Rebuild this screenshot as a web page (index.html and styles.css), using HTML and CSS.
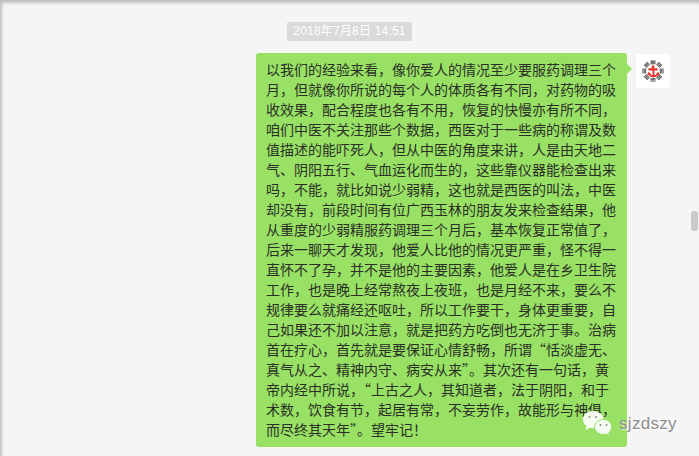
FILE: index.html
```html
<!DOCTYPE html>
<html lang="zh-CN">
<head>
    <meta charset="UTF-8">
    <meta name="viewport" content="width=device-width, initial-scale=1.0">
    <title>聊天记录</title>
    <link rel="stylesheet" href="styles.css">
</head>
<body>
    <div class="chat">
        <div class="time-row">
            <span class="time">2018年7月8日 14:51</span>
        </div>
        <div class="message">
            <div class="bubble">
                <p>以我们的经验来看，像你爱人的情况至少要服药调理三个<br>
                月，但就像你所说的每个人的体质各有不同，对药物的吸<br>
                收效果，配合程度也各有不用，恢复的快慢亦有所不同，<br>
                咱们中医不关注那些个数据，西医对于一些病的称谓及数<br>
                值描述的能吓死人，但从中医的角度来讲，人是由天地二<br>
                气、阴阳五行、气血运化而生的，这些靠仪器能检查出来<br>
                吗，不能，就比如说少弱精，这也就是西医的叫法，中医<br>
                却没有，前段时间有位广西玉林的朋友发来检查结果，他<br>
                从重度的少弱精服药调理三个月后，基本恢复正常值了，<br>
                后来一聊天才发现，他爱人比他的情况更严重，怪不得一<br>
                直怀不了孕，并不是他的主要因素，他爱人是在乡卫生院<br>
                工作，也是晚上经常熬夜上夜班，也是月经不来，要么不<br>
                规律要么就痛经还呕吐，所以工作要干，身体更重要，自<br>
                己如果还不加以注意，就是把药方吃倒也无济于事。治病<br>
                首在疗心，首先就是要保证心情舒畅，所谓“恬淡虚无、<br>
                真气从之、精神内守、病安从来”。其次还有一句话，黄<br>
                帝内经中所说，“上古之人，其知道者，法于阴阳，和于<br>
                术数，饮食有节，起居有常，不妄劳作，故能形与神俱，<br>
                而尽终其天年”。望牢记！</p>
            </div>
            <div class="avatar">
                <svg width="22" height="22" viewBox="0 0 24 24">
                    <g fill="#4a4a4a">
                        <path id="seg" d="M9.200 0.500h5.600v1h-5.600zM9.200 2h5.600v1h-5.600zM9.200 3.500h5.600v1h-5.600z"></path>
                        <path d="M9.200 0.500h5.600v1h-5.600zM9.200 2h5.600v1h-5.600zM9.200 3.500h5.600v1h-5.600z" transform="rotate(45 12 12)"></path>
                        <path d="M9.200 0.500h5.600v1h-5.600zM9.200 2h5.600v1h-5.600zM9.200 3.500h5.600v1h-5.600z" transform="rotate(90 12 12)"></path>
                        <path d="M9.200 0.500h5.600v1h-5.600zM9.200 2h5.600v1h-5.600zM9.200 3.500h5.600v1h-5.600z" transform="rotate(135 12 12)"></path>
                        <path d="M9.200 0.500h5.600v1h-5.600zM9.200 2h5.600v1h-5.600zM9.200 3.500h5.600v1h-5.600z" transform="rotate(180 12 12)"></path>
                        <path d="M9.200 0.500h5.600v1h-5.600zM9.200 2h5.600v1h-5.600zM9.200 3.500h5.600v1h-5.600z" transform="rotate(225 12 12)"></path>
                        <path d="M9.200 0.500h5.600v1h-5.600zM9.200 2h5.600v1h-5.600zM9.200 3.500h5.600v1h-5.600z" transform="rotate(270 12 12)"></path>
                        <path d="M9.200 0.500h5.600v1h-5.600zM9.200 2h5.600v1h-5.600zM9.200 3.500h5.600v1h-5.600z" transform="rotate(315 12 12)"></path>
                    </g>
                    <path d="M10.500 6h3v3h3.500v2.500h-3.500v5c1.200-.2 2.100-.7 2.700-1.500l-1-.6 3.300-1.200.5 3.500-.9-.5c-1 1.600-2.900 2.800-5.600 2.800s-4.600-1.200-5.600-2.800l-.9.5.5-3.500 3.300 1.200-1 .6c.6.800 1.500 1.300 2.700 1.500v-5H7V9h3.500z" fill="#e5352f"></path>
                </svg>
            </div>
        </div>
    </div>

    <div class="watermark">
        <svg width="32" height="28" viewBox="0 0 32 28">
            <path d="M11 1C5 1 1 4.800 1 9.500c0 2.700 1.400 5 3.600 6.600L3.500 20l4.300-2.300c1.200.3 2.200.5 3.700.5 6 0 10-3.900 10-8.700S17 1 11 1z" fill="#fff" fill-opacity="0.92"></path>
            <path d="M21.500 9.500c-5 0-9 3.400-9 7.500s4 7.500 9 7.500c1 0 2-.2 2.900-.5l3.300 2-.9-3.300c1.800-1.400 2.900-3.500 2.900-5.700 0-4.100-3.400-7.500-8.200-7.500z" fill="#f4fbf0" stroke="#98e165" stroke-width="1"></path>
            <circle cx="7.500" cy="7" r="1" fill="#8a8a8a"></circle>
            <circle cx="14" cy="7" r="1" fill="#8a8a8a"></circle>
            <circle cx="18.500" cy="15" r="1" fill="#8a8a8a"></circle>
            <circle cx="24.500" cy="15" r="1" fill="#8a8a8a"></circle>
        </svg>
        <span>sjzdszy</span>
    </div>

    <div class="scroll-thumb"></div>
</body>
</html>
```

FILE: styles.css
```css
html, body {
    height: 100%;
}
body {
    margin: 0;
    background-color: #f5f5f5;
    font-family: "Noto Sans CJK SC", "Liberation Sans", sans-serif;
    overflow: hidden;
    box-shadow: inset 2px 3px 3px rgba(0, 0, 0, 0.22);
}
.chat {
    display: flex;
    flex-direction: column;
    gap: 12px;
    padding-top: 22px;
}
.time-row {
    display: flex;
    justify-content: center;
}
.time {
    height: 19px;
    padding: 0 6px;
    line-height: 19px;
    font-size: 12px;
    letter-spacing: 0.2px;
    color: #fff;
    background-color: #dadada;
    border-radius: 2px;
    font-family: "Liberation Sans", "Noto Sans CJK SC", sans-serif;
}
.message {
    display: flex;
    justify-content: flex-end;
    align-items: flex-start;
    gap: 9px;
    padding-right: 29px;
}
.bubble {
    position: relative;
    width: 351px;
    padding: 6px 10px 8px;
    background-color: #98e165;
    border-radius: 3px;
}
.bubble::after {
    content: "";
    position: absolute;
    top: 11px;
    right: -5px;
    border-left: 5px solid #98e165;
    border-top: 5px solid transparent;
    border-bottom: 5px solid transparent;
}
.bubble p {
    margin: 0;
    font-size: 14px;
    line-height: 20px;
    color: #2b2f26;
    white-space: nowrap;
}
.avatar {
    display: flex;
    align-items: center;
    justify-content: center;
    width: 34px;
    height: 34px;
    margin-top: 1px;
    background-color: #fff;
    border-radius: 2px;
}
.watermark {
    position: absolute;
    left: 582px;
    top: 410px;
    display: flex;
    align-items: center;
    gap: 5px;
}
.watermark span {
    font-family: "Liberation Sans", sans-serif;
    font-size: 17px;
    letter-spacing: 0.3px;
    color: #8e8e8e;
    text-shadow: 1px 1px 1px rgba(255, 255, 255, 0.8);
}
.scroll-thumb {
    position: absolute;
    left: 691px;
    top: 211px;
    width: 7px;
    height: 20px;
    background-color: #c9c9c9;
    border-radius: 3px;
}
```
